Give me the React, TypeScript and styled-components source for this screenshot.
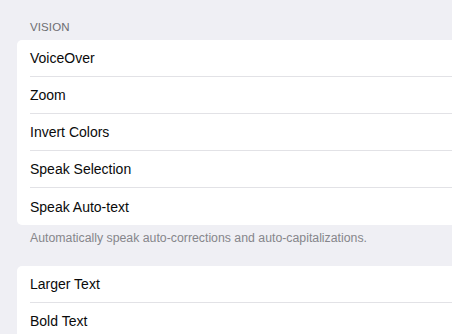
import React from "react";
import styled, { createGlobalStyle } from "styled-components";

const GlobalStyle = createGlobalStyle`
  html, body {
    margin: 0;
    padding: 0;
    background: #efeff4;
    font-family: "Liberation Sans", Arial, sans-serif;
    overflow: hidden;
  }
`;

const Page = styled.div`
  width: 452px;
  height: 334px;
  overflow: hidden;
  background: #efeff4;
`;

const SectionHeader = styled.div`
  padding: 21px 0 6px 30px;
  font-size: 11.5px;
  line-height: 13px;
  color: #6d6d72;
  letter-spacing: 0.1px;
`;

const SectionFooter = styled.div`
  padding: 6px 0 20px 30px;
  font-size: 12.3px;
  line-height: 15px;
  color: #86868b;
  white-space: nowrap;
`;

const Card = styled.div`
  margin-left: 17px;
  margin-right: -30px;
  background: #ffffff;
  border-radius: 5px;
`;

const Row = styled.div`
  padding-left: 13px;
`;

const RowInner = styled.div<{ $last?: boolean }>`
  height: ${(p) => (p.$last ? "37px" : "36px")};
  display: flex;
  align-items: center;
  border-bottom: ${(p) => (p.$last ? "none" : "1px solid #e2e2e6")};
  font-size: 14px;
  color: #0a0a0a;
`;

const vision = ["VoiceOver", "Zoom", "Invert Colors", "Speak Selection", "Speak Auto-text"];
const text = ["Larger Text", "Bold Text"];

function Group({ items, lastOpen }: { items: string[]; lastOpen?: boolean }) {
  return (
    <Card>
      {items.map((label, i) => (
        <Row key={label}>
          <RowInner $last={i === items.length - 1 && !lastOpen}>{label}</RowInner>
        </Row>
      ))}
    </Card>
  );
}

export default function App() {
  return (
    <Page>
      <GlobalStyle />
      <SectionHeader>VISION</SectionHeader>
      <Group items={vision} />
      <SectionFooter>Automatically speak auto-corrections and auto-capitalizations.</SectionFooter>
      <Group items={text} lastOpen />
    </Page>
  );
}
